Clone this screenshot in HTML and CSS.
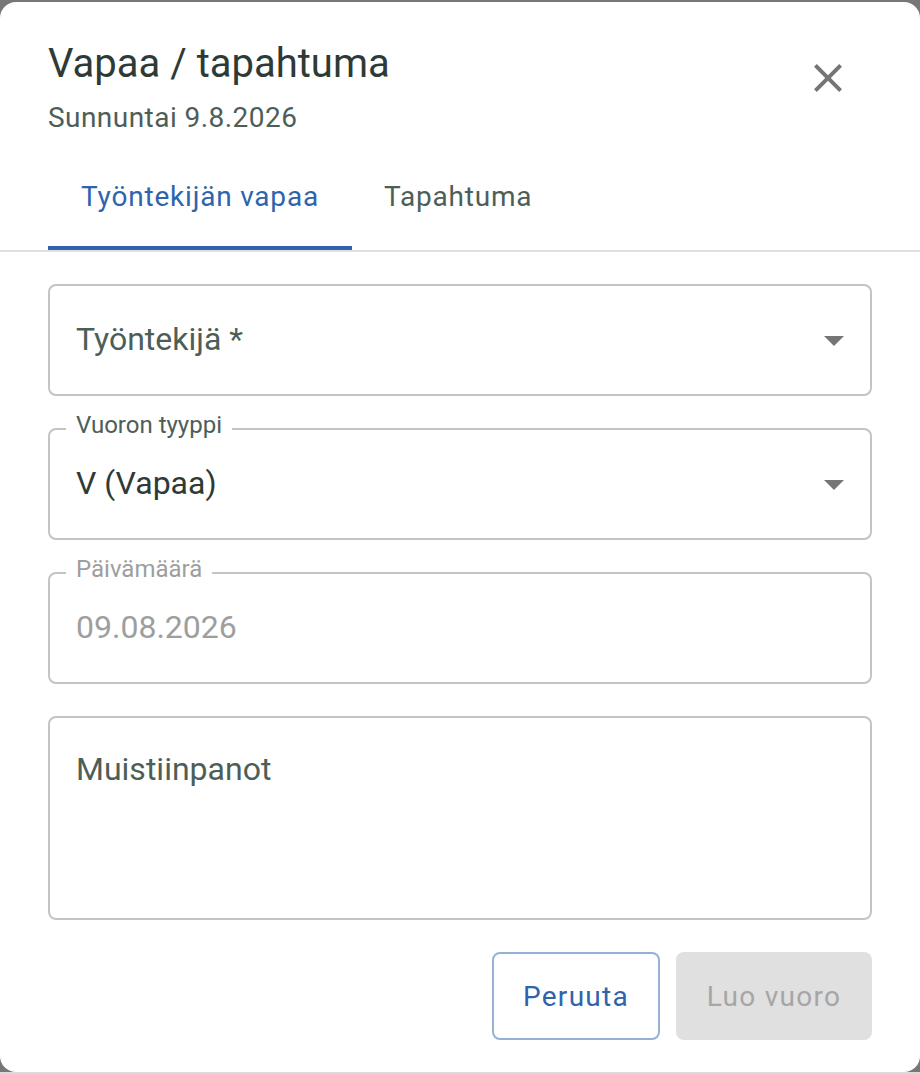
FILE: index.html
```html
<!DOCTYPE html>
<html lang="fi">
<head>
<meta charset="utf-8">
<title>Vapaa / tapahtuma</title>
<link rel="stylesheet" href="styles.css">
</head>
<body>
<div class="dialog" role="dialog" aria-labelledby="dlg-title">
  <header class="dialog-header">
    <div class="heading">
      <h2 id="dlg-title" class="title">Vapaa / tapahtuma</h2>
      <p class="subtitle">Sunnuntai 9.8.2026</p>
    </div>
    <button class="close-btn" aria-label="Sulje">
      <svg viewBox="0 0 24 24" width="48" height="48"><path d="M19 6.41 17.590 5 12 10.590 6.410 5 5 6.410 10.590 12 5 17.590 6.410 19 12 13.410 17.590 19 19 17.590 13.410 12z"/></svg>
    </button>
  </header>

  <nav class="tabs">
    <div class="tab active">Työntekijän vapaa</div>
    <div class="tab">Tapahtuma</div>
  </nav>

  <form class="dialog-body">
    <div class="field select">
      <span class="placeholder">Työntekijä *</span>
      <svg class="arrow" viewBox="0 0 24 24" width="48" height="48"><path d="M7 10l5 5 5-5z"/></svg>
    </div>

    <div class="field select">
      <span class="float-label">Vuoron tyyppi</span>
      <span class="value">V (Vapaa)</span>
      <svg class="arrow" viewBox="0 0 24 24" width="48" height="48"><path d="M7 10l5 5 5-5z"/></svg>
    </div>

    <div class="field disabled">
      <span class="float-label">Päivämäärä</span>
      <span class="value">09.08.2026</span>
    </div>

    <div class="field multiline">
      <span class="placeholder">Muistiinpanot</span>
    </div>

    <div class="actions">
      <button type="button" class="btn btn-outlined">Peruuta</button>
      <button type="button" class="btn btn-disabled" disabled>Luo vuoro</button>
    </div>
  </form>
</div>
</body>
</html>
```

FILE: styles.css
```css
html, body {
  margin: 0;
  height: 1074px;
}

body {
  box-sizing: border-box;
  padding: 2px 0;
  background: linear-gradient(to bottom, #777777 calc(100% - 2px), #dcdcdc calc(100% - 2px));
  font-family: Roboto, "Liberation Sans", Arial, sans-serif;
  overflow: hidden;
}

.dialog {
  box-sizing: border-box;
  height: 1070px;
  background: #ffffff;
  border-radius: 16px;
  display: flex;
  flex-direction: column;
}

/* header */
.dialog-header {
  display: flex;
  justify-content: space-between;
  align-items: flex-start;
  padding: 38px 0 0 48px;
}

.title {
  margin: 0;
  font-size: 40px;
  line-height: 48px;
  font-weight: 400;
  color: #2e3a36;
}

.subtitle {
  margin: 12px 0 0;
  font-size: 28px;
  line-height: 36px;
  color: #4d5e58;
  letter-spacing: 0.45px;
}

.close-btn {
  margin: 14px 68px 0 0;
  padding: 0;
  width: 48px;
  height: 48px;
  border: 0;
  background: none;
  display: flex;
}

.close-btn svg {
  fill: #757575;
}

/* tabs */
.tabs {
  margin-top: 14px;
  display: flex;
  padding-left: 48px;
  border-bottom: 2px solid #e0e0e0;
}

.tab {
  box-sizing: border-box;
  height: 100px;
  padding: 0 32px 4px;
  min-width: 180px;
  display: flex;
  align-items: center;
  justify-content: center;
  font-size: 28px;
  letter-spacing: 0.8px;
  color: #4d5e58;
  border-bottom: 4px solid transparent;
}

.tab.active {
  width: 304px;
  color: #2f64ad;
  border-bottom-color: #2f64ad;
}

/* form */
.dialog-body {
  flex: 1;
  display: flex;
  flex-direction: column;
  gap: 32px;
  padding: 32px 48px 0;
}

.field {
  position: relative;
  box-sizing: border-box;
  height: 112px;
  border: 2px solid #c4c4c4;
  border-radius: 8px;
  padding: 0 26px 3px;
  display: flex;
  align-items: center;
  font-size: 32px;
}

.placeholder {
  color: #4d5e58;
}

.value {
  color: #2e3a36;
}

.float-label {
  position: absolute;
  left: 16px;
  top: -17px;
  padding: 0 10px;
  background: #ffffff;
  font-size: 24px;
  line-height: 24px;
  color: #4d5e58;
}

.arrow {
  position: absolute;
  right: 12px;
  top: 50%;
  margin-top: -24px;
  fill: #757575;
}

.field.disabled .float-label,
.field.disabled .value {
  color: #9e9e9e;
}

.field.multiline {
  height: 204px;
  align-items: flex-start;
  padding-top: 28px;
  line-height: 46px;
}

/* actions */
.actions {
  display: flex;
  justify-content: flex-end;
  gap: 16px;
}

.btn {
  box-sizing: border-box;
  height: 88px;
  padding: 0 20px;
  border-radius: 8px;
  font-family: inherit;
  font-size: 28px;
  letter-spacing: 1.3px;
}

.btn-outlined {
  width: 168px;
  background: #ffffff;
  border: 2px solid #97b1d6;
  color: #2f64ad;
}

.btn-disabled {
  width: 196px;
  background: #e0e0e0;
  border: 0;
  color: #a6a6a6;
}
```
